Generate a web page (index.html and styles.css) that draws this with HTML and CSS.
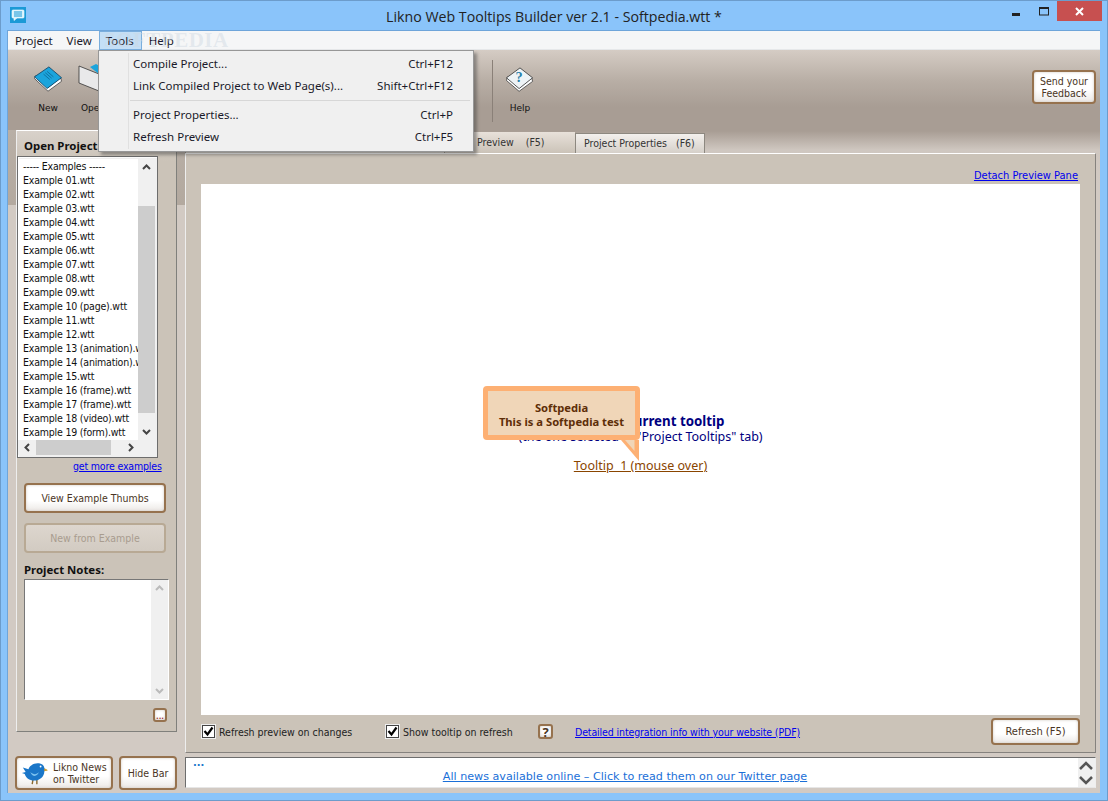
FILE: index.html
```html
<!DOCTYPE html>
<html lang="en">
<head>
<meta charset="utf-8">
<title>Likno Web Tooltips Builder</title>
<link rel="stylesheet" href="styles.css">
</head>
<body>
<div class="window">
  <header class="titlebar">
    <svg class="app-icon" width="16" height="16" viewBox="0 0 16 16"><rect width="16" height="16" fill="#1b9ad6"/><path d="M3 3h10a1 1 0 0 1 1 1v6a1 1 0 0 1-1 1H7l-3 2.500V11H3a1 1 0 0 1-1-1V4a1 1 0 0 1 1-1z" fill="#d8f2fc" stroke="#fff" stroke-width=".6"/><path d="M4 5h8M4 7h8M4 9h8" stroke="#1b9ad6" stroke-width="1"/></svg>
    <div class="title">Likno Web Tooltips Builder ver 2.1 - Softpedia.wtt *</div>
    <div class="controls">
      <span class="ctl"><svg width="9" height="9" viewBox="0 0 9 9"><rect y="6" width="8" height="3" fill="#222"/></svg></span>
      <span class="ctl"><svg width="10" height="9" viewBox="0 0 10 9"><rect x=".5" y=".5" width="9" height="7.500" fill="none" stroke="#222"/><rect width="10" height="2" fill="#222"/></svg></span>
      <span class="close"><svg width="9" height="9" viewBox="0 0 9 9"><path d="M1 1l7 7M8 1L1 8" stroke="#fff" stroke-width="2"/></svg></span>
    </div>
  </header>
  <div class="client">
    <nav class="menubar">
      <span class="mi mi-project">Project</span><span class="mi mi-view">View</span><span class="mi mi-active">Tools</span><span class="mi mi-help">Help</span>
    </nav>
    <div class="toolbar">
      <div class="tool tool-new">
        <svg width="32" height="27" viewBox="0 0 34 30"><path d="M2 14L17 28 32 17 31 13 17 24 3 11z" fill="#fff" stroke="#333" stroke-width=".8"/><path d="M2 12L18 1 32 13 16 25z" fill="#1ba4dc" stroke="#0c3f60" stroke-width=".9"/><path d="M12 9l7 6M14 7.500l7 6M16 6l7 6" stroke="#0f6d9c" stroke-width="1"/></svg>
        <span>New</span>
      </div>
      <div class="tool tool-open">
        <svg width="34" height="30" viewBox="0 0 34 30"><path d="M3 3l20 8v17L3 20z" fill="#e9e9ea" stroke="#333" stroke-width=".8"/><path d="M14 4l6-3 9 5-6 5z" fill="#1ba4dc"/></svg>
        <span>Open</span>
      </div>
      <div class="tool-spacer"></div>
      <div class="tool-sep"></div>
      <div class="tool tool-help">
        <svg width="32" height="27" viewBox="0 0 34 30"><path d="M2 15L16 27 31 16 30 12 16 23 3 11z" fill="#fff" stroke="#333" stroke-width=".8"/><path d="M2 12L17 1 31 12 16 24z" fill="#eef3f6" stroke="#333" stroke-width=".9"/><text x="12" y="17" class="qmark">?</text></svg>
        <span>Help</span>
      </div>
      <button class="btn btn-feedback">Send your<br>Feedback</button>
    </div>
    <div class="body">
      <aside class="left">
        <section class="panel-left">
          <h2 class="panel-title">Open Project</h2>
          <div class="listbox">
            <div class="listrow">
              <ul class="items">
                <li>----- Examples -----</li>
                <li>Example 01.wtt</li><li>Example 02.wtt</li><li>Example 03.wtt</li><li>Example 04.wtt</li><li>Example 05.wtt</li><li>Example 06.wtt</li><li>Example 07.wtt</li><li>Example 08.wtt</li><li>Example 09.wtt</li><li>Example 10 (page).wtt</li><li>Example 11.wtt</li><li>Example 12.wtt</li><li>Example 13 (animation).wtt</li><li>Example 14 (animation).wtt</li><li>Example 15.wtt</li><li>Example 16 (frame).wtt</li><li>Example 17 (frame).wtt</li><li>Example 18 (video).wtt</li><li>Example 19 (form).wtt</li>
              </ul>
              <div class="vscroll">
                <svg width="17" height="16" viewBox="0 0 17 16"><path d="M5 10l3.500-3.500L12 10" fill="none" stroke="#444" stroke-width="2"/></svg>
                <div class="vtrack"><div class="vthumb"></div></div>
                <svg width="17" height="16" viewBox="0 0 17 16"><path d="M5 6l3.500 3.500L12 6" fill="none" stroke="#444" stroke-width="2"/></svg>
              </div>
            </div>
            <div class="hscroll">
              <svg width="17" height="15" viewBox="0 0 17 15"><path d="M10 4L6.500 7.500 10 11" fill="none" stroke="#444" stroke-width="2"/></svg>
              <div class="hthumb"></div>
              <svg width="17" height="15" viewBox="0 0 17 15"><path d="M7 4l3.500 3.500L7 11" fill="none" stroke="#444" stroke-width="2"/></svg>
            </div>
          </div>
          <a class="link more">get more examples</a>
          <button class="btn btn-wide">View Example Thumbs</button>
          <button class="btn btn-wide btn-disabled">New from Example</button>
          <h3 class="notes-title">Project Notes:</h3>
          <div class="notes">
            <div class="notes-text"></div>
            <div class="notes-scroll">
              <svg width="17" height="16" viewBox="0 0 17 16"><path d="M5 10l3.500-3.500L12 10" fill="none" stroke="#bbb" stroke-width="2"/></svg>
              <svg width="17" height="16" viewBox="0 0 17 16"><path d="M5 6l3.500 3.500L12 6" fill="none" stroke="#bbb" stroke-width="2"/></svg>
            </div>
          </div>
          <div class="dots-row"><button class="btn btn-dots">...</button></div>
        </section>
        <div class="bottom-btns">
          <button class="btn btn-twitter">
            <svg width="28" height="28" viewBox="0 0 30 30"><path d="M12 27l1-6M17 27l0-6" stroke="#8a6a30" stroke-width="1.500"/><path d="M2 9l6 2c1-4 7-8 13-6 3 1 4 3 4 5l3 2-3 1c0 6-5 10-11 10-5 0-9-3-10-7L1 15l4-1z" fill="#1a76c8"/><path d="M10 14c3 3 7 3 9 0-1 5-7 6-9 0z" fill="#7cc2f0"/><circle cx="21" cy="8" r="1" fill="#fff"/><path d="M25 10l4 2-4 1z" fill="#e3a020"/></svg>
            <span>Likno News<br>on Twitter</span>
          </button>
          <button class="btn btn-hide">Hide Bar</button>
        </div>
      </aside>
      <main class="right">
        <div class="tabs">
          <span class="tab tab-plain">Project Tooltips  (F4)</span>
          <span class="tab tab-active">Preview    (F5)</span>
          <span class="tab">Project Properties   (F6)</span>
        </div>
        <section class="panel-right">
          <div class="detach"><a class="link">Detach Preview Pane</a></div>
          <div class="preview">
            <p class="pv-bold">This is the current tooltip</p>
            <p class="pv-sub">(the one selected in "Project Tooltips" tab)</p>
            <a class="pv-link">Tooltip&nbsp; 1 (mouse over)</a>
          </div>
          <div class="options">
            <label class="opt opt-a"><span class="check"><svg width="11" height="11" viewBox="0 0 11 11"><path d="M1.500 5l3 3.500L9.500 1.500" fill="none" stroke="#000" stroke-width="2.200"/></svg></span>Refresh preview on changes</label>
            <label class="opt opt-b"><span class="check"><svg width="11" height="11" viewBox="0 0 11 11"><path d="M1.500 5l3 3.500L9.500 1.500" fill="none" stroke="#000" stroke-width="2.200"/></svg></span>Show tooltip on refresh</label>
            <button class="btn btn-q">?</button>
            <a class="link pdf">Detailed integration info with your website (PDF)</a>
            <button class="btn btn-refresh">Refresh (F5)</button>
          </div>
        </section>
        <div class="news">
          <div class="news-main">
            <div class="news-dots">...</div>
            <a class="news-link">All news available online – Click to read them on our Twitter page</a>
          </div>
          <div class="news-scroll">
            <svg width="16" height="13" viewBox="0 0 16 13"><path d="M2 10l6-6 6 6" fill="none" stroke="#555" stroke-width="2.500"/></svg>
            <svg width="16" height="13" viewBox="0 0 16 13"><path d="M2 3l6 6 6-6" fill="none" stroke="#555" stroke-width="2.500"/></svg>
          </div>
        </div>
      </main>
    </div>
  </div>

  <div class="dropdown">
    <div class="dd-row"><span>Compile Project...</span><span>Ctrl+F12</span></div>
    <div class="dd-row"><span>Link Compiled Project to Web Page(s)...</span><span>Shift+Ctrl+F12</span></div>
    <div class="dd-sep"></div>
    <div class="dd-row"><span>Project Properties...</span><span>Ctrl+P</span></div>
    <div class="dd-row"><span>Refresh Preview</span><span>Ctrl+F5</span></div>
  </div>

  <div class="watermark">SOFTPEDIA</div>

  <div class="tooltip">
    <svg class="tail" width="20" height="22" viewBox="0 0 20 22"><path d="M1 0L19 21V0z" fill="#fdb073"/><path d="M5 0L14.500 11V0z" fill="#f0d6b8"/></svg>
    <div class="tip-text">Softpedia<br>This is a Softpedia test</div>
  </div>
</div>
</body>
</html>
```

FILE: styles.css
```css
* { box-sizing: border-box; }
html, body { margin: 0; padding: 0; }
body { width: 1108px; height: 801px; overflow: hidden; font-family: "DejaVu Sans Condensed", "Liberation Sans", sans-serif; font-size: 10.500px; color: #000; }
.window { position: relative; width: 1108px; height: 801px; display: flex; flex-direction: column; background: #8ac4fa; border: 1px solid #6c9ccb; }

.titlebar { height: 29px; flex: none; display: flex; align-items: flex-start; position: relative; }
.app-icon { margin: 6px 0 0 9px; }
.title { position: absolute; left: 0; right: 0; top: 7px; text-align: center; font: 14.200px/18px "Open Sans", sans-serif; color: #222; }
.controls { margin-left: auto; display: flex; align-items: flex-start; margin-right: 5px; }
.ctl { width: 27px; height: 20px; display: flex; align-items: center; justify-content: center; }
.close { width: 45px; height: 20px; background: #c75050; display: flex; align-items: center; justify-content: center; }

.client { flex: 1; min-height: 0; margin: 0 7px 7px 6px; display: flex; flex-direction: column; border: 1px solid #6ea5da; border-bottom: 0; border-right: 0; background: linear-gradient(#e6dfd9 0, #d2c9c1 22px, #b8aea5 50px, #a89d94 76px, #a89d94 100px, #cfc7c0 119px, #d2cac3 155px); }
.menubar { height: 19px; flex: none; background: #f5f6f7; display: flex; font: 11.500px/19px "Noto Sans", sans-serif; color: #1a1a2a; border-bottom: 1px solid #e6e8ea; padding-left: 7px; }
.mi { display: block; height: 19px; }
.mi-view { margin-left: 14px; }
.mi-active { background: #c4dff6; border: 1px solid #7aaedd; line-height: 17px; width: 43px; margin-left: 7px; padding-left: 6px; }
.mi-help { margin-left: 7px; }

.toolbar { height: 80px; flex: none; display: flex; align-items: flex-start; padding: 13px 4px 0 23px; }
.tool { display: flex; flex-direction: column; align-items: center; width: 34px; font: 9px/10px "DejaVu Sans", sans-serif; color: #111; }
.tool span { margin-top: 10px; }
.tool-new svg { margin-top: 3px; }
.tool-help svg { margin-top: 4px; }
.tool-new span { margin-top: 10px; }
.tool-help span { margin-top: 9px; }
.tool-open { margin-left: 11px; }
.tool-spacer { flex: 1; }
.tool-sep { width: 1px; height: 62px; background: #8a8078; margin: -3px 10px 0 0; }
.qmark { font: bold 16px "Liberation Serif", serif; fill: #2a7fa8; }
.tool-help + .btn { margin-left: 495px; }

.btn { font: 10.500px/12px "DejaVu Sans Condensed", sans-serif; color: #4a3524; background: linear-gradient(#fff 60%, #ece9e6); border: 2px solid #96724e; border-radius: 4px; padding: 0; box-shadow: inset 0 0 3px #cfc9c2; white-space: nowrap; }
.btn-feedback { width: 64px; height: 34px; margin-top: 7px; }

.body { flex: 1; min-height: 0; display: flex; padding: 0 3px 3px 8px; background: linear-gradient(#b8afa6, #b3a99f) 0 0 / 177px 75px no-repeat; }
.left { width: 161px; flex: none; display: flex; flex-direction: column; }
.panel-left { height: 602px; background: linear-gradient(#d8d1ca, #cbc3b8 30px); border: 1px solid #80807c; border-top-color: #fff; border-left-color: #eee; display: flex; flex-direction: column; }
.panel-title { font: bold 11.400px/15px "Noto Sans", sans-serif; margin: 7px 0 3px 7px; color: #111; }
.listbox { width: 141px; height: 302px; background: #f0f0f0; border: 1px solid #6d6d6d; display: flex; flex-direction: column; box-shadow: inset 1px 1px 0 #fff; padding: 0 2px 2px 0; }
.listrow { flex: 1; min-height: 0; display: flex; padding: 2px 0 0 1px; }
.items { list-style: none; margin: 0; padding: 0; flex: 1; min-width: 0; overflow: hidden; background: #fff; white-space: nowrap; letter-spacing: -.2px; }
.items li { height: 14px; line-height: 14px; padding-left: 4px; color: #111; }
.vscroll { width: 17px; flex: none; display: flex; flex-direction: column; background: #f0f0f0; }
.vtrack { flex: 1; padding-top: 31px; padding-bottom: 11px; display: flex; }
.vthumb { flex: 1; background: #cdcdcd; }
.hscroll { height: 15px; flex: none; display: flex; background: #f0f0f0; padding-left: 1px; }
.hthumb { width: 75px; background: #cdcdcd; }
.hscroll svg:last-child { margin-left: 11px; }
.link { color: #0000ee; text-decoration: underline; }
.more { align-self: flex-start; margin: 1px 0 0 56px; line-height: 14px; letter-spacing: -.17px; }
.btn-wide { width: 142px; height: 30px; margin: 10px 0 0 7px; }
.btn-wide + .btn-wide { margin-top: 10px; }
.btn-disabled { background: linear-gradient(#ddd6ce, #d2cbc2); border-color: #b8a994; color: #a89c8f; box-shadow: none; }
.notes-title { font: bold 11.400px/15px "Noto Sans", sans-serif; margin: 9px 0 2px 7px; color: #111; }
.notes { width: 145px; height: 121px; margin-left: 7px; display: flex; background: #fff; border: 1px solid; border-color: #777 #fff #fff #777; }
.notes-text { flex: 1; }
.notes-scroll { width: 17px; background: #f0f0f0; display: flex; flex-direction: column; justify-content: space-between; }
.dots-row { display: flex; justify-content: flex-end; margin-top: 8px; padding-right: 9px; }
.btn-dots { width: 14px; height: 14px; font: 10px/6px "Noto Sans", sans-serif; color: #a02020; border-radius: 3px; }
.bottom-btns { display: flex; gap: 6px; margin: 24px 0 0 -1px; }
.btn-twitter { width: 98px; height: 34px; display: flex; align-items: center; padding: 0 0 0 4px; gap: 4px; text-align: left; }
.btn-hide { width: 58px; height: 34px; }

.right { margin-left: 8px; width: 911px; flex: none; display: flex; flex-direction: column; }
.tabs { height: 23px; flex: none; display: flex; align-items: flex-end; line-height: 19px; color: #333; }
.tab { height: 20px; padding: 0 8px; white-space: pre; background: linear-gradient(#f3f0ed, #d6d0c9); border: 1px solid #8d8880; border-bottom: 0; width: 130px; }
.tab-plain { width: 260px; }
.tab-active { width: 130px; background: linear-gradient(#e8e1da, #cbc3b8); padding-left: 32px; border: 0; height: 21px; line-height: 21px; }
.panel-right { height: 600px; flex: none; background: #cbc3b8; border: 1px solid #85827e; border-top-color: #fff; border-left-color: #eee; padding: 0 15px 0 15px; display: flex; flex-direction: column; }
.detach { height: 30px; text-align: right; padding: 15px 2px 0 0; line-height: 14px; font-size: 11px; }
.preview { height: 531px; flex: none; background: #fff; display: flex; flex-direction: column; align-items: center; padding-top: 229px; font-family: "Noto Sans", sans-serif; font-size: 12.500px; color: #000080; }
.preview p { margin: 0; line-height: 16px; }
.pv-bold { font-weight: bold; font-size: 13.300px; }
.pv-link { margin-top: 13px; color: #8a4500; text-decoration: underline; line-height: 16px; }
.options { flex: 1; display: flex; align-items: center; padding-bottom: 4px; color: #222; }
.opt { display: flex; align-items: center; gap: 4px; }
.opt-a { margin-left: 1px; width: 184px; }
.opt-b { width: 152px; }
.check { width: 13px; height: 13px; background: #fff; border: 1px solid #444; display: flex; align-items: center; justify-content: center; box-shadow: 0 0 0 1px #eee; }
.btn-q { width: 15px; height: 15px; font: bold 13px/10px "Noto Sans", sans-serif; border-radius: 3px; }
.pdf { margin-left: 22px; letter-spacing: -.12px; }
.btn-refresh { width: 89px; height: 27px; margin-left: auto; font-size: 11px; }
.news { height: 31px; margin-top: 4px; flex: none; display: flex; background: #fff; border: 1px solid; border-color: #6d6d6d #eee #e6e6e6 #6d6d6d; }
.news-main { flex: 1; display: flex; flex-direction: column; align-items: center; padding-right: 14px; }
.news-dots { align-self: flex-start; margin-left: 7px; color: #2277cc; font: bold 10px/10px "DejaVu Sans", sans-serif; }
.news-link { margin-top: 3px; font: 11.150px/12px "DejaVu Sans", sans-serif; color: #1a6fd8; text-decoration: underline; }
.news-scroll { width: 17px; background: #f0f0f0; display: flex; flex-direction: column; justify-content: center; gap: 2px; }

.dropdown { position: absolute; left: 97px; top: 49px; width: 376px; height: 102px; background: #f0f0f0; border: 1px solid #979797; box-shadow: 3px 3px 3px rgba(60, 60, 60, .45); padding: 2px; font: 11.500px/22px "Noto Sans", sans-serif; color: #1a1a2a; }
.dropdown::before { content: ""; position: absolute; left: 29px; top: 2px; bottom: 2px; width: 1px; background: #e0e0e0; }
.dd-row { display: flex; justify-content: space-between; height: 22px; padding: 0 18px 0 32px; }
.dd-sep { height: 1px; background: #d7d7d7; margin: 3px 1px 3px 29px; }
.watermark { position: absolute; left: 103px; top: 27px; font: bold 21px/24px "Liberation Serif", serif; letter-spacing: .5px; color: rgba(205, 215, 225, .45); pointer-events: none; }

.tooltip { position: absolute; left: 482px; top: 385px; width: 157px; height: 54px; background: #f0d6b8; border: 5px solid #fdb073; border-radius: 4px; color: #5e2e08; font: bold 11.200px/14px "Noto Sans", sans-serif; text-align: center; padding-top: 10px; }
.tail { position: absolute; right: -5px; top: 49px; }
.tip-text { white-space: nowrap; }
```
